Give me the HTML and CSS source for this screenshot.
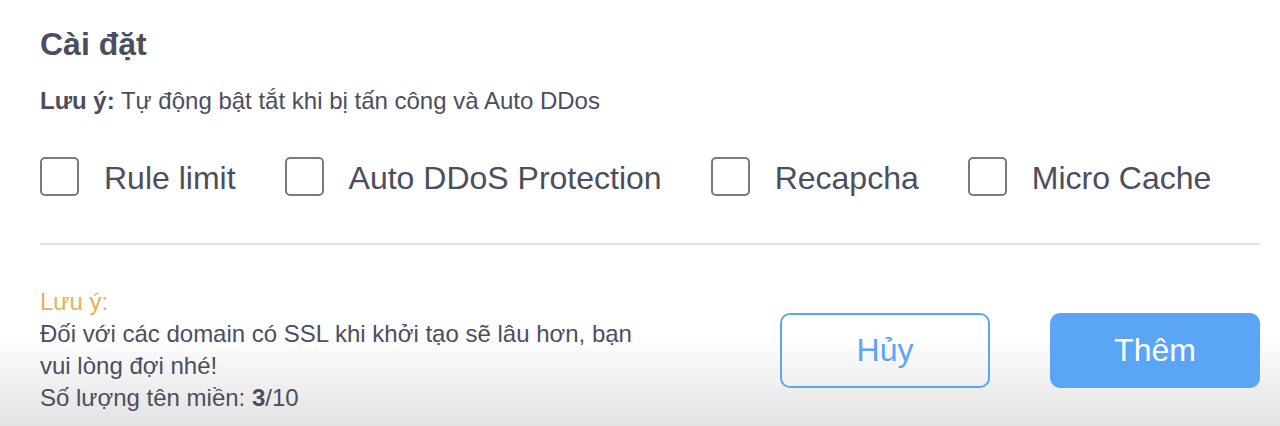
FILE: index.html
```html
<!DOCTYPE html>
<html lang="vi">
<head>
    <meta charset="UTF-8">
    <title>Cài đặt</title>
    <link rel="stylesheet" href="styles.css">
</head>
<body>
    <div class="panel">
        <h2 class="title">Cài đặt</h2>
        <p class="note"><b>Lưu ý:</b> Tự động bật tắt khi bị tấn công và Auto DDos</p>
        <div class="options">
            <label class="option"><span class="box"></span>Rule limit</label>
            <label class="option"><span class="box"></span>Auto DDoS Protection</label>
            <label class="option"><span class="box"></span>Recapcha</label>
            <label class="option"><span class="box"></span>Micro Cache</label>
        </div>
        <hr class="divider">
        <div class="footer">
            <div class="info">
                <div class="warn">Lưu ý:</div>
                <div>Đối với các domain có SSL khi khởi tạo sẽ lâu hơn, bạn vui lòng đợi nhé!</div>
                <div>Số lượng tên miền: <b>3</b>/10</div>
            </div>
            <div class="actions">
                <button class="btn btn-outline">Hủy</button>
                <button class="btn btn-primary">Thêm</button>
            </div>
        </div>
    </div>
</body>
</html>
```

FILE: styles.css
```css
html, body {
    margin: 0;
    height: 100%;
}
body {
    font-family: "Liberation Sans", Arial, sans-serif;
    color: #4b4e5f;
    background: linear-gradient(to bottom, #ffffff 0px, #ffffff 335px, #e2e2e2 426px);
}
.panel {
    padding: 26px 20px 0 40px;
}
.title {
    margin: 0;
    font-size: 32px;
    font-weight: bold;
    line-height: 36px;
}
.note {
    margin: 25px 0 0;
    font-size: 24px;
    line-height: 28px;
}
.options {
    display: flex;
    align-items: center;
    gap: 49px;
    margin-top: 43px;
}
.option {
    display: flex;
    align-items: center;
    gap: 25px;
    font-size: 32px;
    line-height: 40px;
}
.option .box {
    margin-top: -4px;
}
.box {
    width: 35px;
    height: 35px;
    border: 2px solid #7a7a7a;
    border-radius: 5px;
}
.divider {
    margin: 45px 0 0;
    border: none;
    border-top: 2px solid #e2e2e2;
}
.footer {
    display: flex;
    justify-content: space-between;
    align-items: center;
    margin-top: 41px;
}
.info {
    width: 620px;
    font-size: 24px;
    line-height: 32px;
}
.warn {
    color: #e9b14f;
}
.actions {
    display: flex;
    gap: 60px;
}
.btn {
    width: 210px;
    height: 75px;
    border-radius: 10px;
    font-family: "Liberation Sans", Arial, sans-serif;
    font-size: 32px;
    cursor: pointer;
}
.btn-outline {
    background: transparent;
    border: 2px solid #5ba5f6;
    color: #5ba5f6;
}
.btn-primary {
    background: #5ba5f6;
    border: none;
    color: #ffffff;
}
```
